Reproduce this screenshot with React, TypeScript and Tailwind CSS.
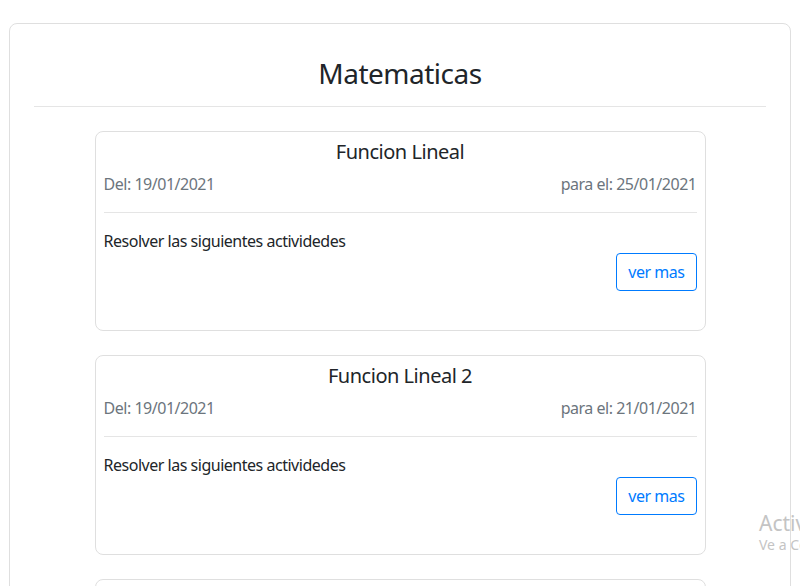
import React from 'react';

interface Tarea {
  id: number;
  titulo: string;
  desde: string;
  hasta: string;
  descripcion: string;
}

const tareas: Tarea[] = [
  { id: 1, titulo: 'Funcion Lineal', desde: '19/01/2021', hasta: '25/01/2021', descripcion: 'Resolver las siguientes actividedes' },
  { id: 2, titulo: 'Funcion Lineal 2', desde: '19/01/2021', hasta: '21/01/2021', descripcion: 'Resolver las siguientes actividedes' },
  { id: 3, titulo: 'Funcion Lineal 3', desde: '19/01/2021', hasta: '28/01/2021', descripcion: 'Resolver las siguientes actividedes' },
];

const TareaCard: React.FC<{ tarea: Tarea }> = ({ tarea }) => (
  <div className="w-[611px] mx-auto border border-[#dfdfdf] rounded-[8px] px-2 pt-2 pb-[39px] bg-white">
    <h5 className="text-center text-[20px] leading-[24px] text-[#212529] mb-2">{tarea.titulo}</h5>
    <div className="flex justify-between text-[16px] leading-[24px] text-[#6c757d]">
      <span>Del: {tarea.desde}</span>
      <span>para el: {tarea.hasta}</span>
    </div>
    <hr className="my-4 border-t border-[#e5e5e5]" />
    <p className="text-[16px] leading-[24px] text-[#212529]">{tarea.descripcion}</p>
    <div className="flex justify-end">
      <button className="h-[38px] px-[11px] border border-[#007bff] rounded-[4px] text-[#007bff] text-[16px] bg-white">
        ver mas
      </button>
    </div>
  </div>
);

export default function App() {
  return (
    <div
      className="relative w-[800px] h-[586px] overflow-hidden bg-white tracking-[-0.03em]"
      style={{ fontFamily: '"Noto Sans", "Open Sans", sans-serif' }}
    >
      <div className="mt-[23px] mx-[9px] border border-[#dfdfdf] rounded-[8px] px-6 pt-[32px] pb-6">
        <h3 className="text-center text-[28px] leading-[34px] text-[#212529]">Matematicas</h3>
        <hr className="mt-4 mb-6 border-t border-[#e5e5e5]" />
        <div className="flex flex-col gap-[24px]">
          {tareas.map((t) => (
            <TareaCard key={t.id} tarea={t} />
          ))}
        </div>
      </div>

      {/* marca de agua de windows */}
      <div className="absolute left-[759px] top-[510px] whitespace-nowrap text-[#c4c4c4] pointer-events-none tracking-normal">
        <div className="text-[21px] leading-[26px]">Activar Windows</div>
        <div className="text-[14px] leading-[18px]">Ve a Configuración para activar Windows.</div>
      </div>
    </div>
  );
}
